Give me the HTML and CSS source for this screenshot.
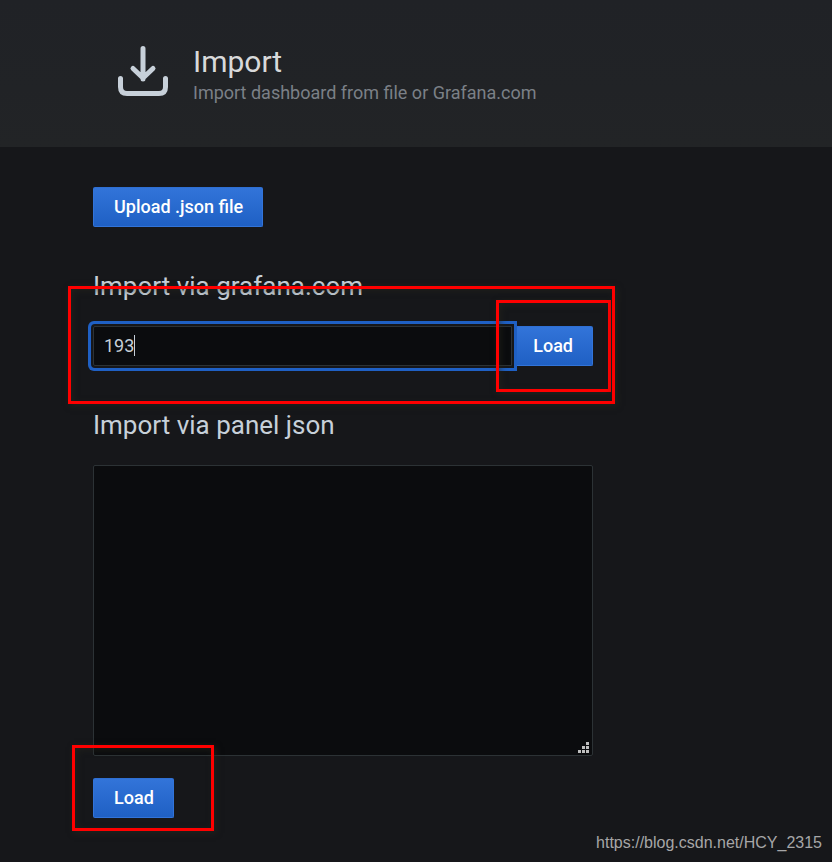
FILE: index.html
```
<!DOCTYPE html>
<html lang="en">
<head>
    <meta charset="UTF-8">
    <meta name="viewport" content="width=device-width, initial-scale=1.0">
    <title>Import - Grafana</title>
    <link rel="stylesheet" href="styles.css">
</head>
<body>
    <header class="page-header">
        <svg class="page-icon" viewBox="0 0 50 50" aria-hidden="true">
            <path d="M25 2.500V33M15 22.500L25 32L35 22.500M2.500 32.500V41Q2.500 47.500 9 47.500H41Q47.500 47.500 47.500 41V32.500"/>
        </svg>
        <div class="page-heading">
            <h1>Import</h1>
            <p>Import dashboard from file or Grafana.com</p>
        </div>
    </header>

    <main class="content">
        <button type="button" class="btn">Upload .json file</button>

        <section class="section">
            <h2><label for="gcom-id">Import via grafana.com</label></h2>
            <div class="gcom-row">
                <div class="gcom-field">
                    <input type="text" id="gcom-id" class="gcom-input" value="193">
                    <span class="caret"></span>
                </div>
                <div class="gcom-action">
                    <button type="button" class="btn btn-joined">Load</button>
                    <span class="mark mark-load"></span>
                </div>
                <span class="mark mark-row"></span>
            </div>
        </section>

        <section class="section">
            <h2><label for="panel-json">Import via panel json</label></h2>
            <div class="json-field">
                <textarea id="panel-json" class="json-input"></textarea>
                <svg class="grip" viewBox="0 0 11 11" aria-hidden="true">
                    <path d="M8 0h3v3H8zM4 4h3v3H4zM8 4h3v3H8zM0 8h3v3H0zM4 8h3v3H4zM8 8h3v3H8z"/>
                </svg>
            </div>
            <div class="json-action">
                <button type="button" class="btn">Load</button>
                <span class="mark mark-json"></span>
            </div>
        </section>
    </main>

    <a class="source" href="https://blog.csdn.net/HCY_2315">https://blog.csdn.net/HCY_2315</a>
</body>
</html>
```
FILE: styles.css
```
* {
    box-sizing: border-box;
}

body {
    margin: 0;
    min-height: 100vh;
    display: flex;
    flex-direction: column;
    background: #16171a;
    color: #c7d0d9;
    font-family: Roboto, "Liberation Sans", sans-serif;
    font-size: 18px;
}

h1, h2, p {
    margin: 0;
    font-weight: 400;
}

.page-header {
    display: flex;
    gap: 25px;
    padding: 46px 24px 39px 118px;
    background: linear-gradient(#202226, #212326 60%, #222426);
}

.page-icon {
    width: 50px;
    height: 50px;
    fill: none;
    stroke: #c7d0d9;
    stroke-width: 5;
    stroke-linecap: round;
    stroke-linejoin: round;
}

.page-heading h1 {
    color: #d8d9da;
    font-size: 30px;
    line-height: 32px;
}

.page-heading p {
    color: #7b8087;
    line-height: 30px;
}

.content {
    width: 100%;
    max-width: 593px;
    padding: 40px 0 0 93px;
}

.btn {
    height: 40px;
    padding: 0 19px 2px 20px;
    border: 1px solid #3274d9;
    border-top-color: #2f6fd3;
    border-radius: 2px;
    background: linear-gradient(#3274d9, #1f60c4);
    color: #fff;
    font-family: inherit;
    font-size: 18px;
    font-weight: 500;
    cursor: pointer;
}

.btn-joined {
    border-radius: 0 2px 2px 0;
}

.section {
    padding-top: 44px;
}

.section h2 {
    margin-bottom: 24px;
    font-size: 26px;
    line-height: 31px;
}

.gcom-row {
    position: relative;
    display: flex;
}

.gcom-field {
    position: relative;
    z-index: 1;
    flex: 1;
}

.gcom-input {
    display: block;
    width: 100%;
    height: 40px;
    padding: 0 10px 2px;
    border: 1px solid #2c3235;
    border-radius: 2px 0 0 2px;
    outline: none;
    background: #0b0c0e;
    box-shadow: 0 0 0 2px #16171a, 0 0 0 5px #1f60c4;
    color: #c7d0d9;
    font-family: inherit;
    font-size: 18px;
    caret-color: transparent;
}

.caret {
    position: absolute;
    top: 9px;
    left: 41px;
    width: 1px;
    height: 21px;
    background: #c7d0d9;
}

.gcom-action,
.json-action,
.json-field {
    position: relative;
}

.json-input {
    display: block;
    width: 100%;
    height: 291px;
    padding: 8px 10px;
    border: 1px solid #2c3235;
    border-radius: 2px;
    outline: none;
    resize: none;
    background: #0b0c0e;
    color: #c7d0d9;
    font-family: inherit;
    font-size: 18px;
}

.grip {
    position: absolute;
    right: 4px;
    bottom: 3px;
    width: 11px;
    height: 11px;
    fill: #bfbfbf;
}

.json-action {
    width: fit-content;
    margin-top: 22px;
}

/* Red highlight frames */
.mark {
    position: absolute;
    z-index: 2;
    border: 3px solid #f00;
    box-shadow: 2px 2px 6px rgba(40, 40, 30, 0.6), inset 2px 2px 6px rgba(40, 40, 30, 0.5);
    pointer-events: none;
}

.mark-row {
    inset: -40px -22px -38px -25px;
}

.mark-load {
    inset: -26px -18px -26px -16px;
}

.mark-json {
    inset: -33px -40px -13px -21px;
}

.source {
    margin: auto 10px 8px auto;
    color: #a6a6a7;
    font-family: "Liberation Sans", Arial, sans-serif;
    font-size: 16px;
    line-height: 22px;
    text-decoration: none;
}
```
